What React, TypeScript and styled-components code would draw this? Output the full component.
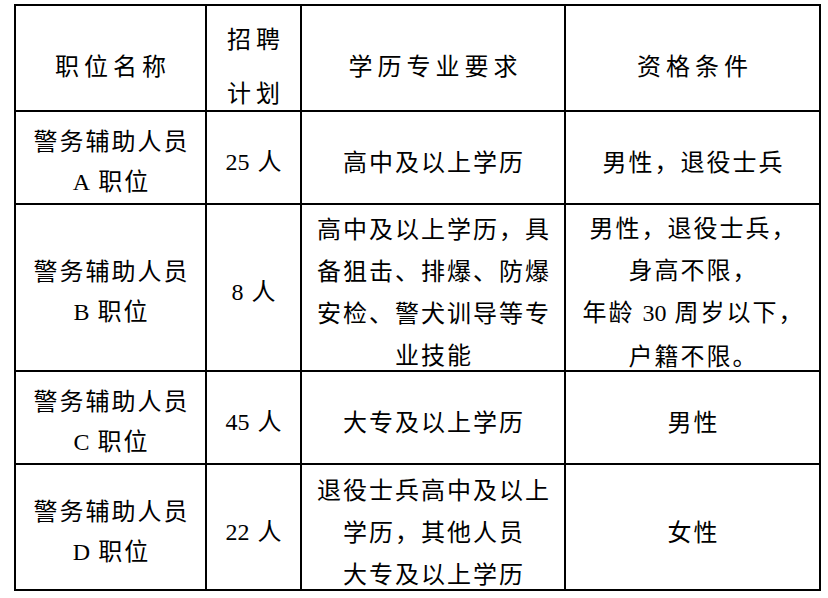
import React from "react";
import styled, { createGlobalStyle } from "styled-components";

const GlobalStyle = createGlobalStyle`
  html, body {
    margin: 0;
    padding: 0;
    background: #ffffff;
  }
  body {
    font-family: "Noto Sans CJK SC", sans-serif;
    color: #000000;
  }
`;

const Page = styled.div`
  padding: 4px 0 0 14px;
`;

const Table = styled.div`
  display: grid;
  grid-template-columns: 189px 93px 262px 253px;
  grid-template-rows: 104px 91px 165px 91px 124px;
  gap: 2px;
  padding: 2px;
  background: #000000;
  width: max-content;
`;

const Cell = styled.div<{ $header?: boolean; $lh?: number }>`
  background: #ffffff;
  display: flex;
  align-items: center;
  justify-content: center;
  text-align: center;
  font-family: "Noto Sans CJK SC", sans-serif;
  font-size: 24px;
  color: #000000;
  line-height: ${(p) => (p.$lh ? p.$lh : p.$header ? 54 : 42)}px;
  letter-spacing: ${(p) => (p.$header ? 5 : 2)}px;
  padding-top: ${(p) => (p.$header ? 13 : 7)}px;
  padding-left: ${(p) => (p.$header ? 5 : 2)}px;
  box-sizing: border-box;
  overflow: visible;
  white-space: nowrap;
`;

const Latin = styled.span<{ $space?: boolean }>`
  font-family: "Liberation Serif", "Times New Roman", serif;
  letter-spacing: ${(p) => (p.$space ? 2 : 0)}px;
`;

type Row = {
  name: string;
  plan: string;
  edu: string[];
  cond: string[];
};

const rows: Row[] = [
  { name: "A", plan: "25", edu: ["高中及以上学历"], cond: ["男性，退役士兵"] },
  {
    name: "B",
    plan: "8",
    edu: ["高中及以上学历，具", "备狙击、排爆、防爆", "安检、警犬训导等专", "业技能"],
    cond: ["男性，退役士兵，", "身高不限，", "年龄 30 周岁以下，", "户籍不限。"],
  },
  { name: "C", plan: "45", edu: ["大专及以上学历"], cond: ["男性"] },
  {
    name: "D",
    plan: "22",
    edu: ["退役士兵高中及以上", "学历，其他人员", "大专及以上学历"],
    cond: ["女性"],
  },
];

function renderLine(line: string) {
  const parts = line.split(/([A-Za-z0-9]+| +)/).filter((p) => p !== "");
  return parts.map((p, i) => {
    if (/^ +$/.test(p)) return <Latin key={i} $space>{p}</Latin>;
    if (/^[A-Za-z0-9]+$/.test(p)) return <Latin key={i}>{p}</Latin>;
    return <React.Fragment key={i}>{p}</React.Fragment>;
  });
}

function Lines({ lines }: { lines: string[] }) {
  return (
    <div>
      {lines.map((l, i) => (
        <React.Fragment key={i}>
          {i > 0 && <br />}
          {renderLine(l)}
        </React.Fragment>
      ))}
    </div>
  );
}

export default function App() {
  return (
    <>
      <GlobalStyle />
      <Page>
        <Table>
          <Cell $header>职位名称</Cell>
          <Cell $header>
            <Lines lines={["招聘", "计划"]} />
          </Cell>
          <Cell $header>学历专业要求</Cell>
          <Cell $header>资格条件</Cell>
          {rows.map((r) => (
            <React.Fragment key={r.name}>
              <Cell $lh={40}>
                <Lines lines={["警务辅助人员", `${r.name} 职位`]} />
              </Cell>
              <Cell>
                <Lines lines={[`${r.plan} 人`]} />
              </Cell>
              <Cell>
                <Lines lines={r.edu} />
              </Cell>
              <Cell>
                <Lines lines={r.cond} />
              </Cell>
            </React.Fragment>
          ))}
        </Table>
      </Page>
    </>
  );
}
